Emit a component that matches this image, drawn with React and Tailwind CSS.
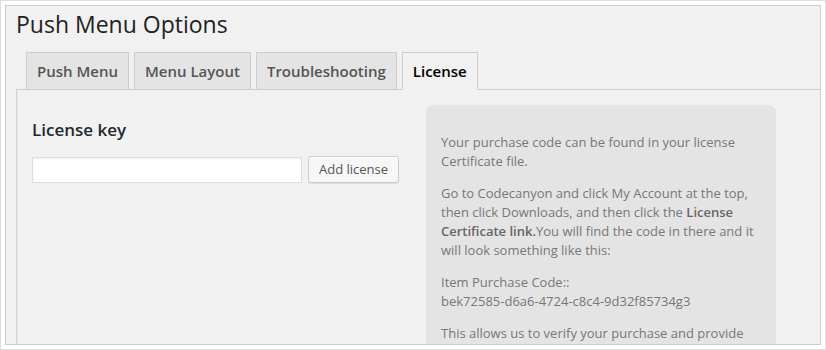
const tabs = ["Push Menu", "Menu Layout", "Troubleshooting", "License"];

function Tab({ label, active }) {
  return (
    <div
      className={
        "-mb-px border px-[10px] py-[6px] text-[15px] font-semibold leading-[24px] " +
        (active
          ? "border-[#ccc] border-b-[#f1f1f1] bg-[#f1f1f1] text-black"
          : "border-[#ccc] bg-[#e4e4e4] text-[#555]")
      }
    >
      {label}
    </div>
  );
}

export default function App() {
  return (
    <div className="h-[350px] w-[826px] border border-[#dedede] bg-white p-1 font-['Open_Sans',sans-serif]">
      <div className="flex h-full flex-col overflow-hidden border border-[#cccccc] bg-[#f1f1f1]">
        <h1 className="pl-[10px] pt-[4px] text-[23px] font-normal leading-[29px] text-[#222]">
          Push Menu Options
        </h1>

        <div className="ml-[10px] mt-[13px] flex flex-1 flex-col">
          {/* tabs */}
          <div className="flex gap-[5px] border-b border-[#ccc] pl-[10px]">
            {tabs.map((t) => (
              <Tab key={t} label={t} active={t === "License"} />
            ))}
          </div>

          {/* panel */}
          <div className="flex flex-1 border-l border-[#d4d4d4] pl-[15px] shadow-[inset_1px_0_0_#e6e6e6]">
            <div className="w-[394px] shrink-0 pt-[28px]">
              <h3 className="text-[17px] font-semibold leading-[24px] text-[#23282d]">
                License key
              </h3>
              <div className="mt-[14px] flex items-center gap-[6px]">
                <input
                  type="text"
                  className="h-[26px] w-[270px] border border-[#ddd] bg-white shadow-[inset_0_1px_2px_rgba(0,0,0,0.07)] outline-none"
                />
                <button className="h-[27px] rounded-[3px] border border-[#ccc] bg-[#f7f7f7] px-[10px] text-[13px] leading-[25px] text-[#555] shadow-[inset_0_1px_0_#fff,0_1px_0_rgba(0,0,0,0.08)]">
                  Add license
                </button>
              </div>
            </div>

            <div className="mt-[15px] flex w-[350px] shrink-0 flex-col gap-[13px] self-stretch rounded-t-[8px] bg-[#e4e4e4] px-[15px] pt-[28px] text-[13px] leading-[19px] text-[#777]">
              <p>
                Your purchase code can be found in your license
                <br />
                Certificate file.
              </p>
              <p>
                Go to Codecanyon and click My Account at the top,
                <br />
                then click Downloads, and then click the{" "}
                <b className="font-semibold text-[#666]">License</b>
                <br />
                <b className="font-semibold text-[#666]">Certificate link.</b>You will find the code in there and it
                <br />
                will look something like this:
              </p>
              <p>
                Item Purchase Code::
                <br />
                bek72585-d6a6-4724-c8c4-9d32f85734g3
              </p>
              <p>This allows us to verify your purchase and provide</p>
            </div>
          </div>
        </div>
      </div>
    </div>
  );
}
